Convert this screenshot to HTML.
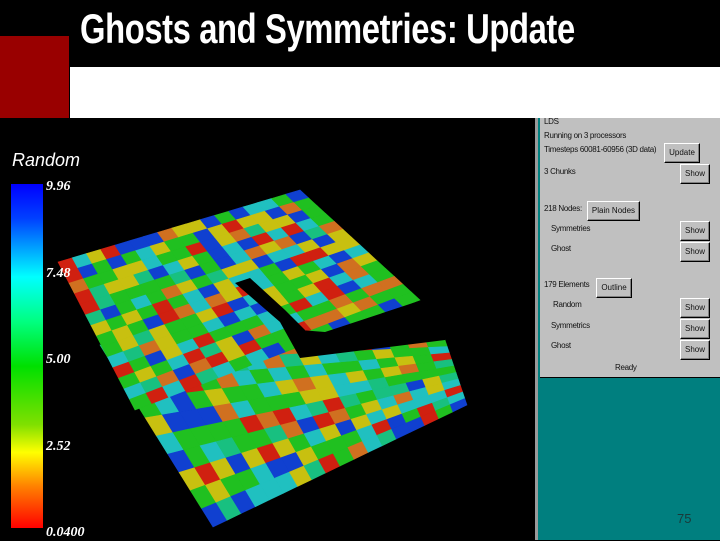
<!DOCTYPE html>
<html><head><style>
body{margin:0;width:720px;height:540px;overflow:hidden;background:#000;position:relative;font-family:"Liberation Sans",sans-serif}
.a{position:absolute}
.t{font-family:"Liberation Sans",sans-serif;font-weight:bold;color:#fff;font-size:42px;transform:scaleX(0.78);transform-origin:left top;letter-spacing:-0.5px;white-space:nowrap}
.lab{color:#fff;font-family:"Liberation Serif",serif;font-style:italic;font-weight:bold;font-size:14px}
.p{font-size:8px;color:#111;white-space:nowrap;letter-spacing:-0.3px}
.b{position:absolute;background:#c0c0c0;border:1px solid;border-color:#fff #000 #000 #fff;box-shadow:inset -1px -1px #808080;font-size:8px;color:#111;text-align:center;line-height:18px;height:18px}
</style></head><body>
<div class="a" style="left:70px;top:67px;width:650px;height:51px;background:#fff"></div>
<div class="a" style="left:0;top:36px;width:69px;height:82px;background:#990000"></div>
<div class="a t" style="left:80px;top:5px">Ghosts and Symmetries: Update</div>
<svg class="a" style="left:0;top:0" width="535" height="540" id="s"></svg>
<div class="a" style="left:12px;top:150px;color:#fff;font-style:italic;font-size:18px">Random</div>
<div class="a" style="left:11px;top:184px;width:32px;height:344px;background:linear-gradient(#0000ff 0%,#0040ff 10%,#00ffff 27%,#00ff80 40%,#00e000 53%,#80e000 70%,#ffff00 78%,#ff8000 88%,#ff0000 100%)"></div>
<div class="a lab" style="left:46px;top:179px">9.96</div>
<div class="a lab" style="left:46px;top:266px">7.48</div>
<div class="a lab" style="left:46px;top:352px">5.00</div>
<div class="a lab" style="left:46px;top:439px">2.52</div>
<div class="a lab" style="left:46px;top:525px">0.0400</div>
<div class="a" style="left:535px;top:118px;width:3px;height:422px;background:#9a9a9a"></div>
<div class="a" style="left:538px;top:118px;width:182px;height:422px;background:#007f7f"></div>
<div class="a" style="left:540px;top:118px;width:180px;height:259px;background:#c0c0c0;border-bottom:1px solid #000"></div>
<div class="a p" style="left:544px;top:117px">LDS</div>
<div class="a p" style="left:544px;top:131px">Running on 3 processors</div>
<div class="a p" style="left:544px;top:145px">Timesteps 60081-60956 (3D data)</div>
<div class="b" style="left:664px;top:143px;width:34px">Update</div>
<div class="a p" style="left:544px;top:167px">3 Chunks</div>
<div class="b" style="left:680px;top:164px;width:28px">Show</div>
<div class="a p" style="left:544px;top:204px">218 Nodes:</div>
<div class="b" style="left:587px;top:201px;width:51px">Plain Nodes</div>
<div class="a p" style="left:551px;top:224px">Symmetries</div>
<div class="b" style="left:680px;top:221px;width:28px">Show</div>
<div class="a p" style="left:551px;top:244px">Ghost</div>
<div class="b" style="left:680px;top:242px;width:28px">Show</div>
<div class="a p" style="left:544px;top:280px">179 Elements</div>
<div class="b" style="left:596px;top:278px;width:34px">Outline</div>
<div class="a p" style="left:553px;top:300px">Random</div>
<div class="b" style="left:680px;top:298px;width:28px">Show</div>
<div class="a p" style="left:551px;top:321px">Symmetrics</div>
<div class="b" style="left:680px;top:319px;width:28px">Show</div>
<div class="a p" style="left:551px;top:341px">Ghost</div>
<div class="b" style="left:680px;top:340px;width:28px">Show</div>
<div class="a p" style="left:615px;top:363px">Ready</div>
<div class="a" style="left:677px;top:511px;color:#1a3a3a;font-size:13px">75</div>
<script>
var s=document.getElementById('s'),h='';
var C=['#20c020','#20c020','#20c020','#20c0c0','#20c0c0','#1040d0','#1040d0','#c8c010','#c8c010','#d02010','#d07020','#18c080'];
var X=2463534242;
function R(){X^=X<<13;X>>>=0;X^=X>>>17;X^=X<<5;X>>>=0;return X/4294967296}
for(var w=0;w<20;w++)R();
function grid(P,N,M){
function m(u,v){var x=(1-u)*(1-v)*P[0][0]+u*(1-v)*P[1][0]+u*v*P[2][0]+(1-u)*v*P[3][0];var y=(1-u)*(1-v)*P[0][1]+u*(1-v)*P[1][1]+u*v*P[2][1]+(1-u)*v*P[3][1];return x.toFixed(1)+','+y.toFixed(1)}
for(var i=0;i<N;i++)for(var j=0;j<M;j++){var u=i/N,v=j/M,du=1/N,dv=1/M;
var c=C[Math.floor(R()*C.length)];
h+='<polygon points="'+m(u,v)+' '+m(u+du,v)+' '+m(u+du,v+dv)+' '+m(u,v+dv)+'" fill="'+c+'" stroke="'+c+'" stroke-width="0.6"/>';}}
grid([[100,345],[445,340],[467,405],[213,527]],18,10);
grid([[58,262],[300,190],[420,300],[135,410]],17,14);
h+='<polygon points="235,283 250,278 285,310 305,330 300,358 280,322" fill="#000"/>';
h+='<polygon points="300,330 325,332 422,300 445,300 445,340 300,358" fill="#000"/>';
s.innerHTML=h;
</script>
</body></html>
